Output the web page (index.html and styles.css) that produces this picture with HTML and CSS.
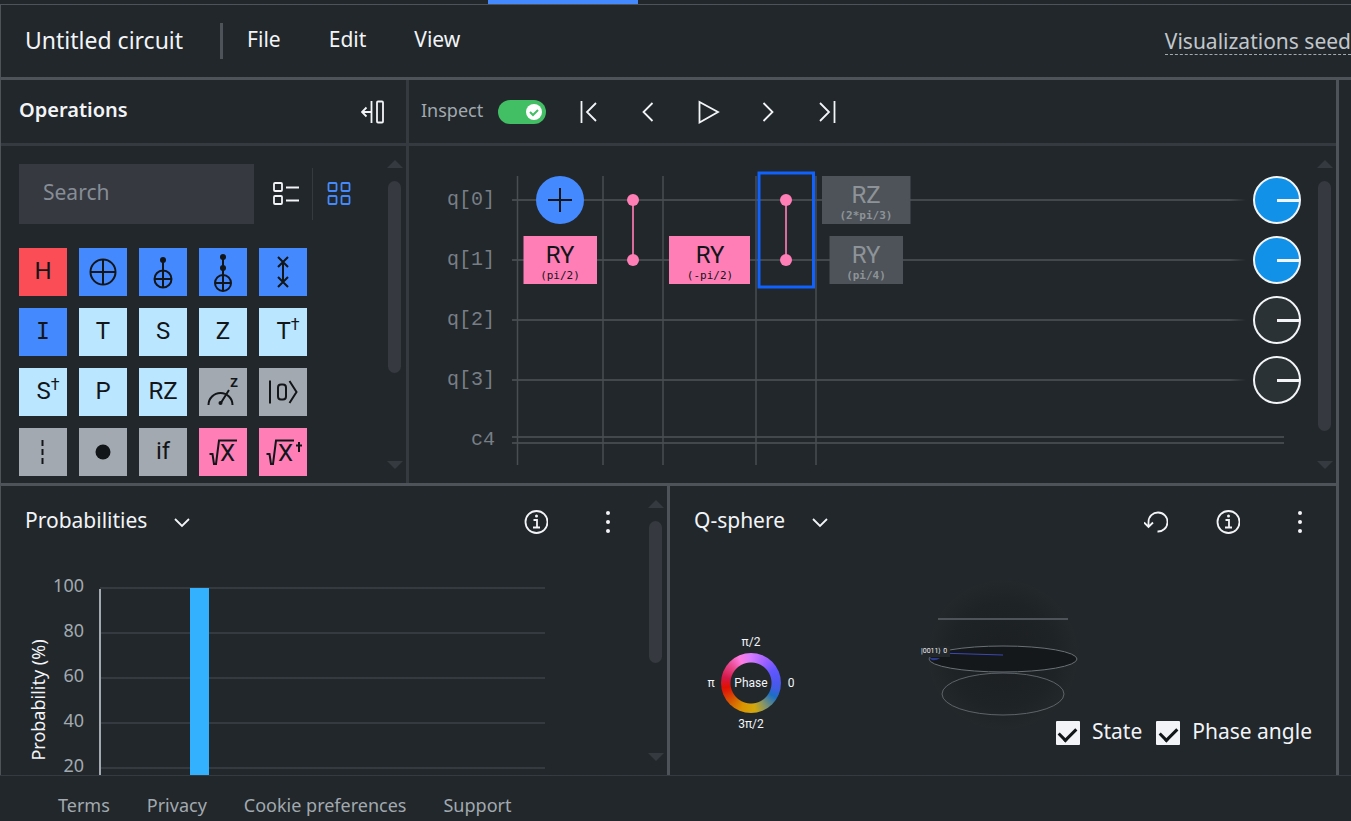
FILE: index.html
```html
<!DOCTYPE html>
<html lang="en">

<head>
    <meta charset="UTF-8">
    <meta name="viewport" content="width=device-width, initial-scale=1.0">
    <title>Untitled circuit</title>
    <link rel="stylesheet" href="styles.css">
</head>

<body>
    <div class="tab-strip"><div class="tab-active"></div></div>

    <div class="composer">
        <header class="menu-bar">
            <h1 class="circuit-name">Untitled circuit</h1>
            <nav class="menus">
                <button class="menu">File</button>
                <button class="menu">Edit</button>
                <button class="menu">View</button>
            </nav>
            <a href="#" class="seed-link">Visualizations seed</a>
        </header>

        <main class="workspace">
            <div class="row row-top">
                <section class="operations">
                    <div class="panel-bar">
                        <h2>Operations</h2>
                        <button class="icon-btn" aria-label="Collapse operations">
                            <svg class="icon" width="24" height="24" viewBox="0 0 24 24"><path d="M1 12h9M5.500 7.500L1 12l4.500 4.500M10.500 1v22" /><rect x="16" y="1.500" width="6" height="21" rx="1" /></svg>
                        </button>
                    </div>
                    <div class="operations-body">
                        <div class="search-row">
                            <input type="text" class="search" placeholder="Search" aria-label="Search">
                            <button class="view-btn" aria-label="List view">
                                <svg class="icon" width="28" height="24" viewBox="0 0 28 24"><rect x="2" y="1" width="8" height="8" rx="1" /><rect x="2" y="14" width="8" height="8" rx="1" /><path d="M14 5.500h13M14 18.500h13" /></svg>
                            </button>
                            <button class="view-btn selected" aria-label="Grid view">
                                <svg class="icon" width="24" height="24" viewBox="0 0 24 24"><rect x="1.500" y="1" width="8" height="8" rx="1" /><rect x="14.500" y="1" width="8" height="8" rx="1" /><rect x="1.500" y="14" width="8" height="8" rx="1" /><rect x="14.500" y="14" width="8" height="8" rx="1" /></svg>
                            </button>
                        </div>
                        <div class="gates">
                            <button class="gate red">H</button>
                            <button class="gate blue" aria-label="NOT">
                                <svg width="48" height="48" viewBox="0 0 48 48"><circle cx="24" cy="24" r="12.500" /><path d="M11.500 24h25M24 11.500v25" /></svg>
                            </button>
                            <button class="gate blue" aria-label="CNOT">
                                <svg width="48" height="48" viewBox="0 0 48 48"><circle class="dot" cx="24" cy="12" r="3" /><circle cx="24" cy="31" r="8.500" /><path d="M24 12v27.500M15.500 31h17" /></svg>
                            </button>
                            <button class="gate blue" aria-label="Toffoli">
                                <svg width="48" height="48" viewBox="0 0 48 48"><circle class="dot" cx="24" cy="9" r="3" /><circle class="dot" cx="24" cy="20" r="3" /><circle cx="24" cy="35" r="8" /><path d="M24 9v34M16 35h16" /></svg>
                            </button>
                            <button class="gate blue" aria-label="SWAP">
                                <svg width="48" height="48" viewBox="0 0 48 48"><path d="M24 14v20M19 9l10 10M29 9l-10 10M19 29l10 10M29 29l-10 10" /></svg>
                            </button>
                            <button class="gate blue serif-i">I</button>
                            <button class="gate sky">T</button>
                            <button class="gate sky">S</button>
                            <button class="gate sky">Z</button>
                            <button class="gate sky dagger">T<sup>†</sup></button>
                            <button class="gate sky dagger">S<sup>†</sup></button>
                            <button class="gate sky">P</button>
                            <button class="gate sky">RZ</button>
                            <button class="gate gray" aria-label="Measure Z">
                                <svg width="48" height="48" viewBox="0 0 48 48"><path d="M9.500 37a12 12 0 0 1 24 0M21.500 35.500L30 22" /><circle class="dot" cx="21.500" cy="35" r="2" /><text x="31" y="19" class="measure-basis">z</text></svg>
                            </button>
                            <button class="gate gray" aria-label="Reset to zero">
                                <svg width="48" height="48" viewBox="0 0 48 48"><path d="M11 12.500v23M30.500 13l7 11-7 11" /><rect x="19" y="16.500" width="8" height="15" rx="3" /></svg>
                            </button>
                            <button class="gate gray" aria-label="Barrier">
                                <svg width="48" height="48" viewBox="0 0 48 48"><path d="M23.500 12v24" stroke-dasharray="6 3" /></svg>
                            </button>
                            <button class="gate gray" aria-label="Control">
                                <svg width="48" height="48" viewBox="0 0 48 48"><circle class="dot" cx="24" cy="24" r="7.500" /></svg>
                            </button>
                            <button class="gate gray">if</button>
                            <button class="gate pink" aria-label="Square root of X">
                                <svg width="48" height="48" viewBox="0 0 48 48"><path d="M10.500 26h3l1.500 10h2l3-23.500h18" /><text x="21" y="33">X</text></svg>
                            </button>
                            <button class="gate pink" aria-label="Square root of X dagger">
                                <svg width="48" height="48" viewBox="0 0 48 48"><path d="M7.500 26h3l1.500 10h2l3-23.500h18M40 14v10M37 17.500h6" /><text x="19" y="33">X</text></svg>
                            </button>
                        </div>
                        <div class="scrollbar"><i class="arrow-up"></i><i class="thumb thumb-ops"></i><i class="arrow-down"></i></div>
                    </div>
                </section>

                <section class="circuit">
                    <div class="panel-bar inspect-bar">
                        <label for="inspect">Inspect</label>
                        <span class="toggle">
                            <input type="checkbox" role="switch" id="inspect" checked>
                            <svg class="toggle-knob" width="16" height="16" viewBox="0 0 16 16"><circle cx="8" cy="8" r="8" /><path d="M4 8l3 3 5-5" /></svg>
                        </span>
                        <div class="steps">
                            <button class="step" aria-label="First step"><svg class="icon" width="24" height="24" viewBox="0 0 24 24"><path d="M5.500 1v22M20 3l-9 9 9 9" /></svg></button>
                            <button class="step" aria-label="Previous step"><svg class="icon" width="24" height="24" viewBox="0 0 24 24"><path d="M16.500 3l-9 9 9 9" /></svg></button>
                            <button class="step" aria-label="Play"><svg class="icon" width="24" height="24" viewBox="0 0 24 24"><path d="M3.500 2v20.500L22 12z" /></svg></button>
                            <button class="step" aria-label="Next step"><svg class="icon" width="24" height="24" viewBox="0 0 24 24"><path d="M7.500 3l9 9-9 9" /></svg></button>
                            <button class="step" aria-label="Last step"><svg class="icon" width="24" height="24" viewBox="0 0 24 24"><path d="M18.500 1v22M4 3l9 9-9 9" /></svg></button>
                        </div>
                    </div>
                    <div class="canvas">
                        <div class="wires">
                            <div class="wire"><span class="register">q[0]</span><i class="line"></i><i class="disc on"></i></div>
                            <div class="wire"><span class="register">q[1]</span><i class="line"></i><i class="disc on"></i></div>
                            <div class="wire"><span class="register">q[2]</span><i class="line"></i><i class="disc"></i></div>
                            <div class="wire"><span class="register">q[3]</span><i class="line"></i><i class="disc"></i></div>
                            <div class="wire"><span class="register">c4</span><i class="line double"></i></div>
                        </div>
                        <svg class="placed" width="410" height="300" viewBox="0 0 410 300">
                            <path class="column" d="M5.500 6v289M91 6v289M151 6v289M244 6v289M304 6v289" />
                            <circle class="not" cx="48" cy="30" r="24" />
                            <path class="plus" d="M36 30h24M48 18v24" />
                            <rect class="placed-pink" x="11.500" y="66" width="73.500" height="48" />
                            <text class="name" x="48" y="93">RY</text>
                            <text class="param" x="48" y="109">(pi/2)</text>
                            <path class="link" d="M121 30v60M274 30v60" />
                            <circle class="placed-pink" cx="121" cy="30" r="6" />
                            <circle class="placed-pink" cx="121" cy="90" r="6" />
                            <rect class="placed-pink" x="157" y="66" width="81" height="48" />
                            <text class="name" x="198" y="93">RY</text>
                            <text class="param" x="198" y="109">(-pi/2)</text>
                            <rect class="current" x="247" y="3" width="54.500" height="114" />
                            <circle class="placed-pink" cx="274" cy="30" r="6" />
                            <circle class="placed-pink" cx="274" cy="90" r="6" />
                            <g class="pending">
                                <rect x="310" y="6" width="88.500" height="48" />
                                <text class="name" x="354" y="33">RZ</text>
                                <text class="param" x="354" y="49">(2*pi/3)</text>
                                <rect x="317.500" y="66" width="73.500" height="48" />
                                <text class="name" x="354" y="93">RY</text>
                                <text class="param" x="354" y="109">(pi/4)</text>
                            </g>
                        </svg>
                        <div class="scrollbar"><i class="arrow-up"></i><i class="thumb thumb-circuit"></i><i class="arrow-down"></i></div>
                    </div>
                </section>
            </div>

            <div class="row row-bottom">
                <section class="result probabilities">
                    <div class="result-bar">
                        <button class="picker">Probabilities
                            <svg class="icon" width="16" height="12" viewBox="0 0 16 12"><path d="M1 2l7 7 7-7" /></svg>
                        </button>
                        <div class="result-tools">
                            <button class="icon-btn" aria-label="About probabilities"><svg class="icon" width="24" height="24" viewBox="0 0 24 24"><circle cx="12.500" cy="12" r="11" /><path d="M9.500 10h3.500v7.500M9 17.500h7" /><circle class="fill" cx="12.500" cy="6" r="1.500" /></svg></button>
                            <button class="icon-btn" aria-label="Probabilities menu"><svg class="icon" width="24" height="24" viewBox="0 0 24 24"><circle class="fill" cx="12" cy="3" r="2" /><circle class="fill" cx="12" cy="12" r="2" /><circle class="fill" cx="12" cy="21" r="2" /></svg></button>
                        </div>
                    </div>
                    <div class="chart">
                        <svg width="560" height="260" viewBox="0 0 560 260">
                            <path class="grid-line" d="M99 30h445M99 75h445M99 120h445M99 165h445M99 210h445" />
                            <path class="axis" d="M99 31v229" />
                            <rect class="bar" x="189" y="30" width="19" height="230" />
                            <g class="ticks">
                                <text x="83" y="34">100</text>
                                <text x="83" y="79">80</text>
                                <text x="83" y="124">60</text>
                                <text x="83" y="169">40</text>
                                <text x="83" y="214">20</text>
                            </g>
                            <text class="axis-title" transform="translate(44 142) rotate(-90)">Probability (%)</text>
                        </svg>
                    </div>
                    <div class="scrollbar"><i class="arrow-up"></i><i class="thumb thumb-chart"></i><i class="arrow-down"></i></div>
                </section>

                <section class="result">
                    <div class="result-bar">
                        <button class="picker">Q-sphere
                            <svg class="icon" width="16" height="12" viewBox="0 0 16 12"><path d="M1 2l7 7 7-7" /></svg>
                        </button>
                        <div class="result-tools">
                            <button class="icon-btn" aria-label="Reset view"><svg class="icon" width="24" height="24" viewBox="0 0 24 24"><path d="M13.500 21.500a9.500 9.500 0 1 0-9-9.500v5M0 12.500l4.500 4.500 4.500-4.500" /></svg></button>
                            <button class="icon-btn" aria-label="About Q-sphere"><svg class="icon" width="24" height="24" viewBox="0 0 24 24"><circle cx="12.500" cy="12" r="11" /><path d="M9.500 10h3.500v7.500M9 17.500h7" /><circle class="fill" cx="12.500" cy="6" r="1.500" /></svg></button>
                            <button class="icon-btn" aria-label="Q-sphere menu"><svg class="icon" width="24" height="24" viewBox="0 0 24 24"><circle class="fill" cx="12" cy="3" r="2" /><circle class="fill" cx="12" cy="12" r="2" /><circle class="fill" cx="12" cy="21" r="2" /></svg></button>
                        </div>
                    </div>
                    <div class="sphere-body">
                        <div class="phase">
                            <span class="phase-top">π/2</span>
                            <span>π</span>
                            <div class="phase-wheel"><span>Phase</span></div>
                            <span>0</span>
                            <span class="phase-bottom">3π/2</span>
                        </div>
                        <svg class="sphere" width="150" height="150" viewBox="0 0 150 150">
                            <defs>
                                <radialGradient id="ball">
                                    <stop offset="0" stop-color="#1b1f21" />
                                    <stop offset="0.700" stop-color="#1e2325" />
                                    <stop offset="1" stop-color="#23282a" />
                                </radialGradient>
                            </defs>
                            <circle cx="75" cy="75" r="75" fill="url(#ball)" />
                            <path class="latitude-flat" d="M10 39h130" />
                            <ellipse class="equator" cx="75" cy="79" rx="74" ry="13" />
                            <ellipse class="latitude" cx="75" cy="114" rx="61" ry="21" />
                            <path class="state-vector" d="M10 73l65 2" />
                            <path class="state-node" d="M1 78h11q-4 3-8 2z" />
                            <rect class="state-tag" x="-8" y="66" width="30" height="11" />
                            <text class="state-label" x="-7" y="73">|0011⟩ 0</text>
                        </svg>
                        <div class="options">
                            <label class="option"><input type="checkbox" checked><span>State</span></label>
                            <label class="option"><input type="checkbox" checked><span>Phase angle</span></label>
                        </div>
                    </div>
                </section>
            </div>
        </main>
    </div>

    <footer class="footer">
        <a href="#">Terms</a>
        <a href="#">Privacy</a>
        <a href="#">Cookie preferences</a>
        <a href="#">Support</a>
    </footer>
</body>
</html>
```
FILE: styles.css
```css
* {
    box-sizing: border-box;
}

body {
    margin: 0;
    height: 100vh;
    display: flex;
    flex-direction: column;
    overflow: hidden;
    background-color: #21272a;
    color: #f2f4f8;
    font-family: 'Noto Sans', sans-serif;
    font-size: 21px;
    line-height: 28px;
}

button {
    padding: 0;
    border: none;
    background: none;
    color: inherit;
    font: inherit;
    cursor: pointer;
}

h1, h2 {
    margin: 0;
}

svg {
    display: block;
}

.icon {
    fill: none;
    stroke: #f2f4f8;
    stroke-width: 1.8;
}

.icon .fill {
    fill: #f2f4f8;
    stroke: none;
}

.icon-btn {
    width: 24px;
    height: 24px;
}

.tab-strip {
    flex: none;
    height: 4px;
    padding-left: 488px;
}

.tab-active {
    width: 150px;
    height: 4px;
    background-color: #4589ff;
}

.composer {
    flex: 1;
    min-height: 0;
    display: flex;
    flex-direction: column;
    border-top: 1px solid #4d5358;
    border-left: 1px solid #4d5358;
}

/* Menu bar */
.menu-bar {
    flex: none;
    display: flex;
    align-items: center;
    height: 75px;
    padding-left: 24px;
    border-bottom: 3px solid #4d5358;
    white-space: nowrap;
}

.circuit-name {
    padding: 0 37px 3px 0;
    font-size: 23px;
    font-weight: 400;
}

.menus {
    display: flex;
    gap: 48px;
    padding: 0 0 3px 24px;
    border-left: 3px solid #4d5358;
    line-height: 33px;
}

.seed-link {
    margin-left: auto;
    border-bottom: 1px dashed #a2a9b0;
    color: #c1c7cd;
    line-height: 26px;
    text-decoration: none;
}

.workspace {
    flex: 1;
    min-height: 0;
    display: flex;
    flex-direction: column;
    margin-right: 12px;
    border-right: 3px solid #4d5358;
}

.row {
    display: flex;
}

.row-top {
    flex: none;
    border-bottom: 3px solid #4d5358;
}

.row-bottom {
    flex: 1;
    min-height: 0;
}

.panel-bar {
    display: flex;
    align-items: center;
    height: 66px;
    border-bottom: 3px solid #343a3f;
}

/* Operations */
.operations {
    flex: none;
    width: 408px;
    border-right: 3px solid #343a3f;
}

.operations .panel-bar {
    justify-content: space-between;
    padding: 0 21px 0 18px;
}

.operations h2 {
    padding-bottom: 4px;
    font-size: 20px;
    font-weight: 600;
}

.operations-body {
    position: relative;
    height: 337px;
    padding: 18px;
}

.search-row {
    display: flex;
    align-items: center;
    margin-bottom: 24px;
}

.search {
    width: 235px;
    height: 60px;
    margin-right: 5px;
    padding: 0 24px 4px;
    border: none;
    background-color: #363940;
    color: #f2f4f8;
    font: inherit;
}

.search::placeholder {
    color: #878d96;
    opacity: 1;
}

.view-btn {
    display: flex;
    align-items: center;
    justify-content: center;
    width: 53px;
    height: 52px;
}

.view-btn.selected {
    border-left: 1px solid #343a3f;
}

.view-btn.selected .icon {
    stroke: #4589ff;
}

.gates {
    display: grid;
    grid-template-columns: repeat(5, 48px);
    gap: 12px;
}

.gate {
    height: 48px;
    padding-bottom: 2px;
    color: #121619;
    font-family: Roboto, sans-serif;
    font-size: 24px;
}

.gate svg {
    margin-bottom: -2px;
    fill: none;
    stroke: #121619;
    stroke-width: 2;
}

.gate .dot {
    fill: #121619;
    stroke: none;
}

.gate text {
    fill: #121619;
    stroke: none;
    font-size: 24px;
}

.gate .measure-basis {
    font-size: 16px;
    font-weight: 500;
}

.gate sup {
    font-size: 16px;
    line-height: 0;
}

.dagger {
    padding-left: 10px;
}

.serif-i {
    font-family: 'DejaVu Sans Mono', monospace;
    font-size: 23px;
}

.red {
    background-color: #fa4d56;
}

.blue {
    background-color: #4589ff;
}

.sky {
    background-color: #bae6ff;
}

.gray {
    background-color: #a2a9b0;
}

.pink {
    background-color: #ff7eb6;
}

/* Scrollbars */
.scrollbar {
    position: absolute;
    top: 14px;
    right: 4px;
    bottom: 14px;
    width: 15px;
    display: flex;
    flex-direction: column;
    align-items: center;
}

.arrow-up,
.arrow-down {
    border: 8px solid transparent;
    border-top-width: 0;
    border-bottom: 8px solid #343a3f;
}

.arrow-down {
    margin-top: auto;
    border-top: 8px solid #343a3f;
    border-bottom-width: 0;
}

.thumb {
    width: 13px;
    margin-top: 13px;
    border-radius: 7px;
    background-color: #363940;
}

.thumb-ops {
    height: 192px;
}

.thumb-circuit {
    height: 250px;
}

.thumb-chart {
    height: 142px;
}

/* Circuit */
.circuit {
    flex: 1;
    min-width: 0;
}

.inspect-bar {
    padding-left: 12px;
}

.inspect-bar label {
    width: 77px;
    padding-bottom: 4px;
    color: #a2a9b0;
    font-size: 18px;
}

.toggle {
    position: relative;
    height: 24px;
}

.toggle input {
    appearance: none;
    width: 48px;
    height: 24px;
    margin: 0;
    display: block;
    border-radius: 12px;
    background-color: #42be65;
}

.toggle-knob {
    position: absolute;
    top: 4px;
    right: 4px;
    fill: #ffffff;
    pointer-events: none;
}

.toggle-knob path {
    fill: none;
    stroke: #42be65;
    stroke-width: 2;
}

.steps {
    display: flex;
    padding-left: 12px;
}

.step {
    width: 60px;
    display: flex;
    justify-content: center;
}

.canvas {
    position: relative;
    padding: 24px 35px 13px 0;
}

.wire {
    display: flex;
    align-items: center;
    height: 60px;
}

.register {
    width: 103px;
    padding-right: 17px;
    color: #787e86;
    font-family: 'Liberation Mono', monospace;
    font-size: 20px;
    text-align: right;
}

.line {
    flex: 1;
    height: 2px;
    margin-right: 7px;
    background: linear-gradient(to left, transparent, #43484c 16px);
}

.line.double {
    height: 8px;
    margin-right: 17px;
    border: 2px solid #43484c;
    border-width: 2px 0;
    background: none;
}

.disc {
    display: flex;
    align-items: center;
    justify-content: flex-end;
    width: 48px;
    height: 48px;
    border: 2px solid #f2f4f8;
    border-radius: 50%;
    background-color: #2a3235;
}

.disc::after {
    content: '';
    width: 22px;
    height: 3px;
    background-color: #f2f4f8;
}

.disc.on {
    background-color: #1192e8;
}

.placed {
    position: absolute;
    top: 24px;
    left: 103px;
}

.placed text {
    fill: #121619;
    text-anchor: middle;
}

.placed .name {
    font-family: Roboto, sans-serif;
    font-size: 24px;
}

.placed .param {
    font-family: 'DejaVu Sans Mono', monospace;
    font-size: 11px;
}

.placed .column {
    stroke: #484e52;
    stroke-width: 1.5;
}

.placed .not {
    fill: #4589ff;
}

.placed .plus {
    stroke: #121619;
    stroke-width: 2;
}

.placed-pink {
    fill: #ff7eb6;
}

.placed .link {
    stroke: #d96c9c;
    stroke-width: 2;
}

.placed .current {
    fill: none;
    stroke: #0f62fe;
    stroke-width: 3;
}

.placed .pending rect {
    fill: #4d5358;
}

.placed .pending text {
    fill: #8d9399;
}

.placed .pending .param {
    font-weight: 700;
}

/* Results */
.result {
    position: relative;
    flex: 1;
    min-width: 0;
    display: flex;
    flex-direction: column;
}

.probabilities {
    border-right: 3px solid #4d5358;
}

.result-bar {
    flex: none;
    display: flex;
    align-items: center;
    justify-content: space-between;
    height: 72px;
    padding: 0 24px;
}

.probabilities .result-bar {
    padding-right: 47px;
}

.picker {
    display: flex;
    align-items: center;
    gap: 27px;
    padding-bottom: 4px;
}

.picker .icon {
    margin-top: 6px;
}

.result-tools {
    display: flex;
    gap: 48px;
}

.chart {
    flex: 1;
    min-height: 0;
    overflow: hidden;
}

.grid-line {
    stroke: #343a3f;
    stroke-width: 2;
}

.axis {
    stroke: #a2a9b0;
    stroke-width: 2;
}

.bar {
    fill: #33b1ff;
}

.ticks {
    fill: #a2a9b0;
    font-size: 18px;
    text-anchor: end;
}

.axis-title {
    fill: #f2f4f8;
    font-size: 18px;
    text-anchor: middle;
}

.sphere-body {
    position: relative;
    flex: 1;
    display: grid;
    grid-template-columns: 1fr 150px 1fr;
    align-items: end;
}

.phase {
    display: grid;
    grid-template-columns: 20px 60px 20px;
    grid-template-rows: 22px 60px 22px;
    place-items: center;
    justify-content: start;
    margin: 0 0 40px 31px;
    font-family: Roboto, sans-serif;
    font-size: 12px;
    line-height: 16px;
}

.phase-top,
.phase-bottom {
    grid-column: 2;
}

.phase-top + span {
    grid-column: 1;
}

.phase-wheel {
    display: flex;
    align-items: center;
    justify-content: center;
    width: 60px;
    height: 60px;
    border-radius: 50%;
    background: radial-gradient(#21272a 20px, transparent 21px),
        conic-gradient(#d67bff, #9a60ff 35deg, #6256ff 60deg, #4b57ee 90deg, #3c5ee0 105deg, #1a6fc4 120deg, #83946b 148deg, #d3a80c 172deg, #dc9400 200deg, #d56000 225deg, #dd2208 250deg, #e01000 260deg, #d4184a 282deg, #e8478b 310deg, #ff7ce0 335deg, #d67bff 360deg);
}

.sphere {
    margin-bottom: 45px;
    overflow: visible;
}

.latitude-flat {
    stroke: #4d5358;
    stroke-width: 2;
}

.equator {
    fill: #14181a;
    stroke: #697077;
}

.latitude {
    fill: none;
    stroke: #5d646a;
}

.state-vector {
    stroke: #3c48b4;
    stroke-width: 1;
}

.state-node {
    fill: #2c3a8c;
}

.state-tag {
    fill: #21272a;
}

.state-label {
    fill: #f2f4f8;
    font-family: Roboto, sans-serif;
    font-size: 7px;
}

.options {
    position: absolute;
    right: 24px;
    bottom: 28px;
    display: flex;
    gap: 14px;
}

.option {
    display: flex;
    align-items: center;
    gap: 12px;
}

.option span {
    padding-bottom: 4px;
    font-size: 21px;
    line-height: 24px;
}

.option input {
    appearance: none;
    display: flex;
    justify-content: center;
    width: 24px;
    height: 24px;
    margin: 0;
    border-radius: 1px;
    background-color: #f2f4f8;
}

.option input:checked::after {
    content: '';
    width: 8px;
    height: 14px;
    margin-top: 3px;
    border: solid #121619;
    border-width: 0 3px 3px 0;
    transform: rotate(45deg);
}

/* Footer */
.footer {
    flex: none;
    display: flex;
    gap: 37px;
    height: 46px;
    padding: 15px 58px 0;
    border-top: 1px solid #343a3f;
    font-size: 18px;
}

.footer a {
    color: #a2a9b0;
    text-decoration: none;
}
```
